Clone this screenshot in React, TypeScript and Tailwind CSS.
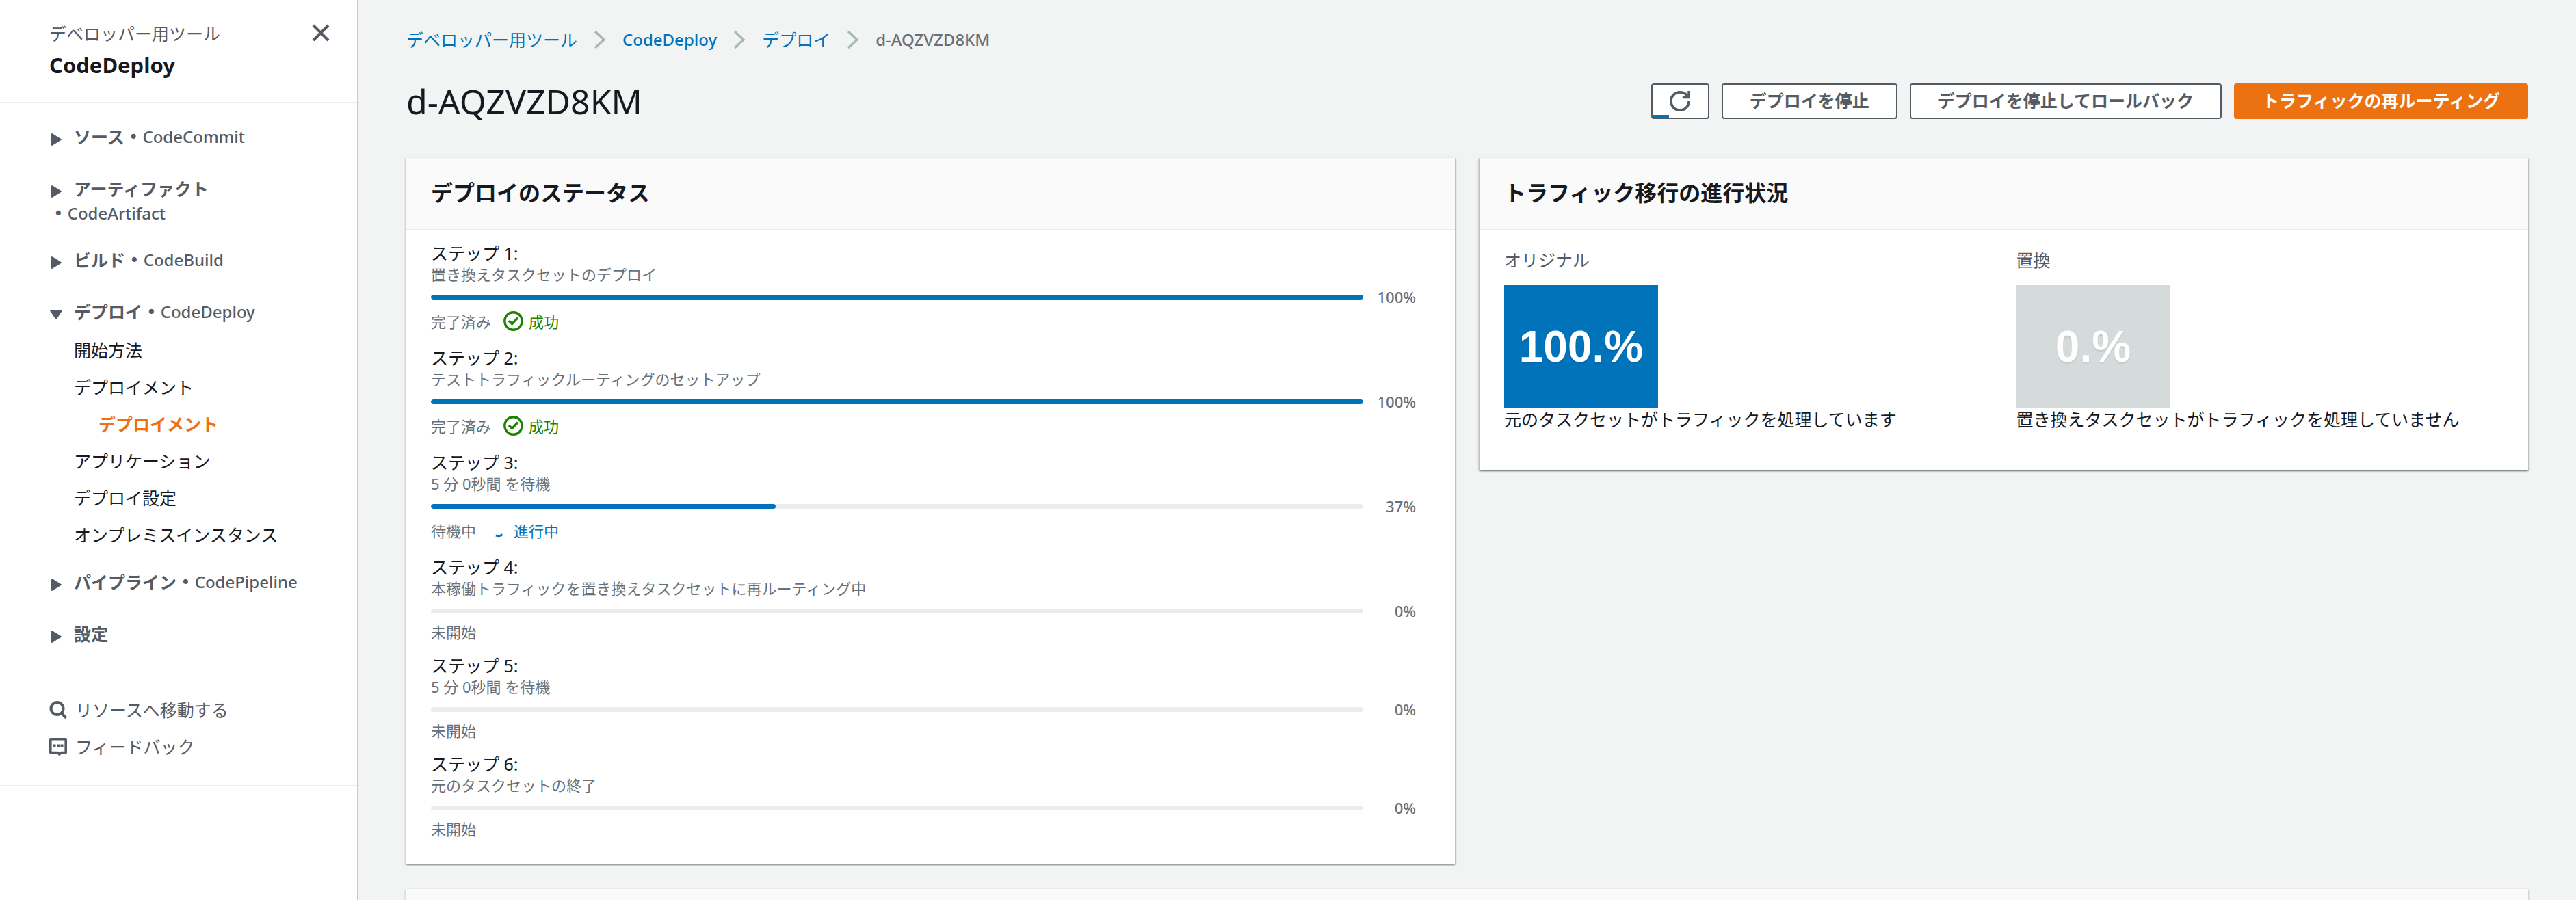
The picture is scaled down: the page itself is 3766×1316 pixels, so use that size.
import React from 'react';

type Tone = 'success' | 'progress' | 'idle';

interface Step {
  description: string;
  percent: number;
  status: string;
  tone: Tone;
}

const steps: Step[] = [
  { description: '置き換えタスクセットのデプロイ', percent: 100, status: '完了済み', tone: 'success' },
  { description: 'テストトラフィックルーティングのセットアップ', percent: 100, status: '完了済み', tone: 'success' },
  { description: '5 分 0秒間 を待機', percent: 37, status: '待機中', tone: 'progress' },
  { description: '本稼働トラフィックを置き換えタスクセットに再ルーティング中', percent: 0, status: '未開始', tone: 'idle' },
  { description: '5 分 0秒間 を待機', percent: 0, status: '未開始', tone: 'idle' },
  { description: '元のタスクセットの終了', percent: 0, status: '未開始', tone: 'idle' },
];

const deployLinks = [
  { label: '開始方法' },
  { label: 'デプロイメント' },
  { label: 'デプロイメント', active: true },
  { label: 'アプリケーション' },
  { label: 'デプロイ設定' },
  { label: 'オンプレミスインスタンス' },
];

const crumbs = ['デベロッパー用ツール', 'CodeDeploy', 'デプロイ'];

// Icons
const CloseIcon = () => (
  <svg className="h-[26px] w-[26px]" viewBox="0 0 26 26" fill="none" stroke="currentColor" strokeWidth={4}>
    <path d="M2 2l22 22M24 2L2 24" />
  </svg>
);

const CaretIcon = ({ open }: { open?: boolean }) => (
  <svg className="h-5 w-5" viewBox="0 0 20 20" fill="currentColor" stroke="currentColor" strokeWidth={2} strokeLinejoin="round">
    {open ? <path d="M2 4h16l-8 12z" /> : <path d="M4 2v16l13-8z" />}
  </svg>
);

const SearchIcon = () => (
  <svg className="h-[26px] w-[26px]" viewBox="0 0 26 26" fill="none" stroke="currentColor" strokeWidth={4}>
    <circle cx="11.5" cy="11" r="9" />
    <path d="M17.5 17.5l7.3 7.3" />
  </svg>
);

const FeedbackIcon = () => (
  <svg className="h-[26px] w-[26px]" viewBox="0 0 26 26" fill="none" stroke="currentColor" strokeWidth={3.6} strokeLinejoin="round">
    <path d="M1.8 1.8h22.4v19.8h-7l-2.4 2.2-2.4-2.2H1.8z" />
    <path d="M5.5 11.3h4M11 11.3h4M16.5 11.3h4" />
  </svg>
);

const ChevronIcon = () => (
  <svg className="h-7 w-[18px] text-[#aab7b8]" viewBox="0 0 18 28" fill="none" stroke="currentColor" strokeWidth={3.4}>
    <path d="M2 2l13 12L2 26" />
  </svg>
);

const RefreshIcon = () => (
  <svg className="h-[30px] w-[30px]" viewBox="0 0 16 16" fill="none" stroke="currentColor" strokeWidth={2}>
    <path d="M10 5h5V0" />
    <path d="M15 8a6.957 6.957 0 01-7 7 6.957 6.957 0 01-7-7 6.957 6.957 0 017-7 6.87 6.87 0 016.3 4" />
  </svg>
);

const SuccessIcon = () => (
  <svg className="h-[29px] w-[29px]" viewBox="0 0 29 29" fill="none" stroke="currentColor" strokeWidth={3.4}>
    <circle cx="14.5" cy="14.5" r="12.7" />
    <path d="M8 14l4.6 4.6L21 9.6" />
  </svg>
);

const SpinnerIcon = () => (
  <svg className="h-[29px] w-[29px]" viewBox="0 0 29 29" fill="none" stroke="currentColor" strokeWidth={3}>
    <path d="M11 22Q16.5 24 20.5 20.5" />
  </svg>
);

const ServiceName = ({ name }: { name: string }) => (
  <span className="block h-9 text-2xl leading-9 font-medium whitespace-pre">
    {' '}
    <span className="font-['DejaVu_Sans',sans-serif]">•</span> {name}
  </span>
);

// Collapsible section title in the side navigation
const NavSection = ({ label, service, open, wrap }: { label: string; service?: string; open?: boolean; wrap?: boolean }) => (
  <button type="button" aria-expanded={!!open} className="block w-full text-left leading-9">
    <span className="flex h-9 items-center">
      <span className="mt-2 mr-4">
        <CaretIcon open={open} />
      </span>
      <span className="font-bold">{label}</span>
      {service && !wrap && <ServiceName name={service} />}
    </span>
    {wrap && service && <ServiceName name={service} />}
  </button>
);

const Card = ({ title, children }: { title: string; children: React.ReactNode }) => (
  <section className="border-t border-[#eaeded] bg-white shadow-[0_2px_2px_0_rgba(0,28,36,0.3),2px_2px_2px_0_rgba(0,28,36,0.15),-2px_2px_2px_0_rgba(0,28,36,0.15)]">
    <div className="border-b border-[#eaeded] bg-[#fafafa] px-9 pt-[31px] pb-[33px]">
      <h2 className="text-[32px] leading-10 font-bold">{title}</h2>
    </div>
    {children}
  </section>
);

const StepRow = ({ step, index }: { step: Step; index: number }) => (
  <li className="text-[22px] text-[#687078]">
    <h3 className="text-[25px] leading-8 text-[#16191f]">ステップ {index + 1}:</h3>
    <p className="leading-[30px]">{step.description}</p>
    <div className="flex h-9 items-center gap-5 pr-[21px]">
      <div
        role="progressbar"
        aria-label={`ステップ ${index + 1}`}
        aria-valuenow={step.percent}
        className="h-[7px] flex-1 overflow-hidden rounded bg-[#eaeded]"
      >
        <div className="h-full rounded bg-[#0073bb]" style={{ width: `${step.percent}%` }} />
      </div>
      <span className="w-[57px] text-right font-medium">{step.percent}%</span>
    </div>
    <div className="flex items-center gap-[18px] leading-[26px]">
      <span>{step.status}</span>
      {step.tone === 'success' && (
        <span className="flex items-center gap-2 py-[3px] text-[#1d8102]">
          <SuccessIcon />
          成功
        </span>
      )}
      {step.tone === 'progress' && (
        <span className="flex items-center gap-2 py-[3px] text-[#0073bb]">
          <SpinnerIcon />
          進行中
        </span>
      )}
    </div>
  </li>
);

const TrafficBox = ({ label, value, note, active }: { label: string; value: string; note: string; active?: boolean }) => (
  <div>
    <div className="mb-[19px] leading-9 text-[#545b64]">{label}</div>
    <div
      className={`flex h-[180px] w-[225px] items-center justify-center font-['Liberation_Sans',sans-serif] text-[64px] font-bold text-white [text-shadow:0_2px_2px_rgba(0,0,0,0.1)] ${
        active ? 'bg-[#0073bb]' : 'bg-[#d5dbdb]'
      }`}
    >
      {value}
    </div>
    <p className="leading-8">{note}</p>
  </div>
);

const Sidebar = () => (
  <aside className="w-[524px] shrink-0 border-r-2 border-[#c3cccc] bg-white text-[25px] text-[#545b64]">
    <div className="flex items-start justify-between border-b border-[#eaeded] pt-[31px] pr-10 pb-[34px] pl-[72px]">
      <div>
        <a href="#" className="block leading-9">デベロッパー用ツール</a>
        <a href="#" className="mt-2 block text-[31px] leading-10 font-bold text-[#16191f]">CodeDeploy</a>
      </div>
      <button type="button" aria-label="閉じる" className="mt-1">
        <CloseIcon />
      </button>
    </div>

    <nav className="border-b border-[#eaeded] pt-8 pr-5 pb-[38px] pl-[72px]">
      <div className="mb-10"><NavSection label="ソース" service="CodeCommit" /></div>
      <div className="mb-8"><NavSection label="アーティファクト" service="CodeArtifact" wrap /></div>
      <div className="mb-10"><NavSection label="ビルド" service="CodeBuild" /></div>
      <NavSection label="デプロイ" service="CodeDeploy" open />
      <ul className="mt-5 mb-[33px] flex flex-col gap-[18px] pl-9 leading-9 text-[#16191f]">
        {deployLinks.map((link, i) => (
          <li key={i} className={link.active ? 'pl-9 font-bold text-[#ec7211]' : ''}>
            <a href="#">{link.label}</a>
          </li>
        ))}
      </ul>
      <div className="mb-10"><NavSection label="パイプライン" service="CodePipeline" /></div>
      <div className="mb-[75px]"><NavSection label="設定" /></div>
      <div className="flex flex-col gap-[18px] leading-9">
        <a href="#" className="flex items-center gap-3">
          <SearchIcon />
          リソースへ移動する
        </a>
        <a href="#" className="flex items-center gap-3">
          <FeedbackIcon />
          フィードバック
        </a>
      </div>
    </nav>
  </aside>
);

const buttonBase = 'flex h-[52px] items-center rounded border-2 px-[39px] font-bold';

export default function App() {
  return (
    <div className="flex min-h-screen bg-[#f2f3f3] font-['Noto_Sans','Noto_Sans_CJK_JP',sans-serif] text-[25px] text-[#16191f]">
      <Sidebar />

      <main className="flex flex-1 flex-col px-[70px] pt-10">
        <nav className="flex items-center gap-6 leading-9">
          {crumbs.map((crumb) => (
            <React.Fragment key={crumb}>
              <a
                href="#"
                className={crumb === 'CodeDeploy' ? 'text-2xl leading-9 font-medium text-[#0073bb]' : 'text-[#0073bb]'}
              >
                {crumb}
              </a>
              <ChevronIcon />
            </React.Fragment>
          ))}
          <span className="text-2xl leading-9 font-medium text-[#687078]">d-AQZVZD8KM</span>
        </nav>

        {/* Title and actions */}
        <div className="mt-[46px] flex items-center justify-between">
          <h1 className="text-[50px] leading-[52px]">d-AQZVZD8KM</h1>
          <div className="flex gap-[18px] text-[#545b64]">
            <button
              type="button"
              aria-label="更新"
              className="relative flex h-[52px] w-[85px] items-center justify-center rounded border-2 border-[#545b64] bg-white"
            >
              <RefreshIcon />
              <span className="absolute bottom-0 left-0 h-1 w-6 bg-[#0073bb]" />
            </button>
            <button type="button" className={`${buttonBase} border-[#545b64] bg-white`}>デプロイを停止</button>
            <button type="button" className={`${buttonBase} border-[#545b64] bg-white`}>デプロイを停止してロールバック</button>
            <button type="button" className={`${buttonBase} border-[#ec7211] bg-[#ec7211] text-white`}>トラフィックの再ルーティング</button>
          </div>
        </div>

        <div className="mt-14 mb-9 grid grid-cols-2 items-start gap-9">
          <Card title="デプロイのステータス">
            <ol className="flex flex-col gap-5 px-9 pt-[18px] pb-[38px]">
              {steps.map((step, i) => (
                <StepRow key={i} step={step} index={i} />
              ))}
            </ol>
          </Card>

          <Card title="トラフィック移行の進行状況">
            <div className="grid grid-cols-2 gap-9 px-9 pt-[26px] pb-[58px]">
              <TrafficBox label="オリジナル" value="100.%" note="元のタスクセットがトラフィックを処理しています" active />
              <TrafficBox label="置換" value="0.%" note="置き換えタスクセットがトラフィックを処理していません" />
            </div>
          </Card>
        </div>

        {/* Next panel starts at the lower edge of the window */}
        <section className="flex-1 border-t border-[#eaeded] bg-[#fafafa] shadow-[2px_2px_2px_0_rgba(0,28,36,0.15),-2px_2px_2px_0_rgba(0,28,36,0.15)]" />
      </main>
    </div>
  );
}
